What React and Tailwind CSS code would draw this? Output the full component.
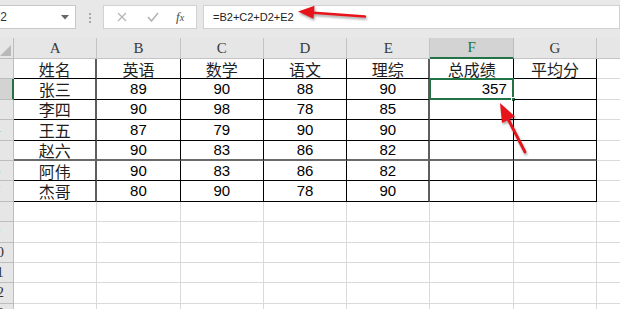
import React from 'react';

const cols = ['A', 'B', 'C', 'D', 'E', 'F', 'G', 'H'];

const rows = [
  ['姓名', '英语', '数学', '语文', '理综', '总成绩', '平均分'],
  ['张三', '89', '90', '88', '90', '357', ''],
  ['李四', '90', '98', '78', '85', '', ''],
  ['王五', '87', '79', '90', '90', '', ''],
  ['赵六', '90', '83', '86', '82', '', ''],
  ['阿伟', '90', '83', '86', '82', '', ''],
  ['杰哥', '80', '90', '78', '90', '', ''],
];

const cjk = { fontFamily: '"Noto Sans CJK SC", sans-serif' };
const num = { fontFamily: '"Liberation Sans", Arial, sans-serif' };
const serif = { fontFamily: '"Liberation Serif", "Times New Roman", serif' };

const Cell = ({ r, c, text }) => {
  const inTable = r >= 1 && r <= 7 && c <= 6;
  const isCjk = r === 1 || c === 0;
  const selected = r === 2 && c === 5;
  let cls = 'relative shrink-0 w-[83.3px] h-full border-r border-b flex items-center overflow-visible ';
  if (inTable) {
    cls += 'border-black ';
    if (c === 0 || c === 4) cls += 'border-r-2 border-r-[#5e5e5e] ';
    if (r === 5) cls += 'border-b-2 border-b-[#6a6a6a] ';
  } else {
    cls += 'border-[#dadada] ';
  }
  cls += selected ? 'justify-end pr-[6px] ' : 'justify-center ';
  return (
    <div className={cls}>
      {text && (
        <span
          className={isCjk ? 'text-[16px] leading-[20px] text-[#1e1e1e]' : 'text-[15px] leading-[20px] text-black'}
          style={isCjk ? cjk : num}
        >
          {text}
        </span>
      )}
      {selected && (
        <div className="absolute -left-px -top-px w-[85px] h-[22px] border-2 border-[#217346]">
          <div className="absolute -right-[4px] -bottom-[4px] w-[5px] h-[5px] bg-[#217346] border border-white" />
        </div>
      )}
    </div>
  );
};

const Toolbar = () => (
  <div className="flex h-[30px] pt-[5px] gap-0">
    <div className="ml-[-10px] w-[86px] h-[24px] bg-white border border-[#c8c8c8] flex items-center justify-between pl-[2px] pr-[6px]">
      <span className="text-[12px] text-[#333]" style={num}>F2</span>
      <svg width="8" height="5" viewBox="0 0 8 5"><path d="M0 0h8L4 4.5z" fill="#666" /></svg>
    </div>
    <div className="w-[27px] flex flex-col items-center justify-center gap-[2px]">
      <div className="w-[2px] h-[2px] bg-[#a8a8a8]" />
      <div className="w-[2px] h-[2px] bg-[#a8a8a8]" />
      <div className="w-[2px] h-[2px] bg-[#a8a8a8]" />
    </div>
    <div className="w-[94px] h-[24px] bg-white border border-[#d2d2d2] flex items-center">
      <svg className="ml-[13px]" width="10" height="10" viewBox="0 0 10 10">
        <path d="M1 1l8 8M9 1l-8 8" stroke="#b4b4b4" strokeWidth="1.2" />
      </svg>
      <svg className="ml-[20px]" width="12" height="10" viewBox="0 0 12 10">
        <path d="M1 5l3.5 4L11 1" stroke="#b4b4b4" strokeWidth="1.6" fill="none" />
      </svg>
      <span className="ml-[17px] text-[13px] italic text-[#4a4a4a]" style={serif}>
        f<span className="text-[10px]">x</span>
      </span>
    </div>
    <div className="ml-[6px] flex-1 h-[24px] bg-white border border-[#d2d2d2] flex items-center pl-[9px]">
      <span className="text-[11px] text-[#222]" style={num}>=B2+C2+D2+E2</span>
    </div>
  </div>
);

export default function App() {
  return (
    <div className="relative w-[620px] h-[309px] overflow-hidden bg-[#e8e8e8]">
      <Toolbar />
      <div className="h-[8px]" />
      <div className="ml-[-20px] bg-white">
        {/* column headers */}
        <div className="flex h-[21px] bg-[#e6e6e6]">
          <div className="relative shrink-0 w-[34px] h-full border-r border-b border-[#bdbdbd]">
            <svg className="absolute right-[2px] bottom-[2px]" width="11" height="11" viewBox="0 0 11 11">
              <path d="M11 0V11H0z" fill="#b9b9b9" />
            </svg>
          </div>
          {cols.map((c) => (
            <div
              key={c}
              className={
                c === 'F'
                  ? 'shrink-0 w-[83.3px] h-full bg-[#d3d3d3] border-r border-[#bdbdbd] border-b-2 border-b-[#217346] flex items-center justify-center text-[15px] text-[#217346]'
                  : 'shrink-0 w-[83.3px] h-full border-r border-b border-[#c4c4c4] flex items-center justify-center text-[15px] text-[#3a3a3a]'
              }
              style={serif}
            >
              {c}
            </div>
          ))}
        </div>
        {Array.from({ length: 13 }, (_, i) => i + 1).map((r) => (
          <div key={r} className="flex h-[20.4px]">
            <div
              className={
                r === 2
                  ? 'shrink-0 w-[34px] h-full bg-[#d3d3d3] border-r-2 border-r-[#217346] border-b border-[#bdbdbd] flex items-center justify-center text-[15px] text-[#217346] leading-none'
                  : 'shrink-0 w-[34px] h-full bg-[#e6e6e6] border-r border-b border-[#bdbdbd] flex items-center justify-center text-[15px] text-[#333] leading-none'
              }
              style={serif}
            >
              {r}
            </div>
            {cols.map((c, ci) => (
              <Cell key={c} r={r} c={ci} text={rows[r - 1] ? rows[r - 1][ci] : ''} />
            ))}
          </div>
        ))}
      </div>
      <svg
        className="absolute left-0 top-0 pointer-events-none drop-shadow-[1px_2px_1px_rgba(0,0,0,0.35)]"
        width="620"
        height="309"
        viewBox="0 0 620 309"
      >
        <line x1="365" y1="16.5" x2="310" y2="12.5" stroke="#e8141b" strokeWidth="2.6" strokeLinecap="round" />
        <polygon points="298,11.5 314.5,5.8 313.5,18.8" fill="#e8141b" />
        <line x1="525" y1="152" x2="506" y2="115" stroke="#e8141b" strokeWidth="2.8" strokeLinecap="round" />
        <polygon points="500,103 515,116.5 502,123" fill="#e8141b" />
      </svg>
    </div>
  );
}
